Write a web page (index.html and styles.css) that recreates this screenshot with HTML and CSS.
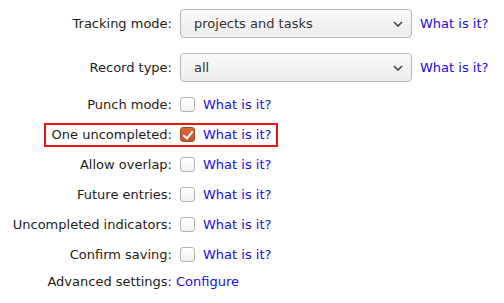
FILE: index.html
```html
<!DOCTYPE html>
<html lang="en">
<head>
<meta charset="utf-8">
<title>Settings</title>
<link rel="stylesheet" href="styles.css">
</head>
<body>
<form class="settings">
  <div class="row row-select">
    <label class="lbl" for="tm">Tracking mode:</label>
    <div class="ctl">
      <div class="select">
        <select id="tm"><option>projects and tasks</option></select>
        <svg class="chev" width="10" height="6" viewBox="0 0 10 6"><path d="M1 1 L5 5 L9 1" fill="none" stroke="#444" stroke-width="1.6"/></svg>
      </div>
      <a href="#" class="help">What is it?</a>
    </div>
  </div>
  <div class="row row-select">
    <label class="lbl" for="rt">Record type:</label>
    <div class="ctl">
      <div class="select">
        <select id="rt"><option>all</option></select>
        <svg class="chev" width="10" height="6" viewBox="0 0 10 6"><path d="M1 1 L5 5 L9 1" fill="none" stroke="#444" stroke-width="1.6"/></svg>
      </div>
      <a href="#" class="help">What is it?</a>
    </div>
  </div>
  <div class="row row-check first">
    <label class="lbl" for="pm">Punch mode:</label>
    <div class="ctl"><input type="checkbox" id="pm"><a href="#" class="help">What is it?</a></div>
  </div>
  <div class="row row-check">
    <label class="lbl" for="ou"><span class="hltext">One uncompleted:</span></label>
    <div class="ctl"><input type="checkbox" id="ou" checked><a href="#" class="help">What is it?</a></div>
  </div>
  <div class="row row-check">
    <label class="lbl" for="ao">Allow overlap:</label>
    <div class="ctl"><input type="checkbox" id="ao"><a href="#" class="help">What is it?</a></div>
  </div>
  <div class="row row-check">
    <label class="lbl" for="fe">Future entries:</label>
    <div class="ctl"><input type="checkbox" id="fe"><a href="#" class="help">What is it?</a></div>
  </div>
  <div class="row row-check">
    <label class="lbl" for="ui">Uncompleted indicators:</label>
    <div class="ctl"><input type="checkbox" id="ui"><a href="#" class="help">What is it?</a></div>
  </div>
  <div class="row row-check">
    <label class="lbl" for="cs">Confirm saving:</label>
    <div class="ctl"><input type="checkbox" id="cs"><a href="#" class="help">What is it?</a></div>
  </div>
  <div class="row row-adv">
    <span class="lbl">Advanced settings:</span>
    <div class="ctl adv"><a href="#" class="help">Configure</a></div>
  </div>
</form>
</body>
</html>
```
FILE: styles.css
```css
html, body {
  margin: 0;
  padding: 0;
  background: #ffffff;
}
body {
  font-family: "DejaVu Sans", "Liberation Sans", sans-serif;
  font-size: 13px;
  color: #1c1c1c;
}
.settings {
  display: flex;
  flex-direction: column;
  padding: 9px 0 0 8px;
}
.row {
  display: flex;
  align-items: center;
}
.row-select {
  height: 29px;
}
.row-select + .row-select {
  margin-top: 15px;
}
.row-check {
  height: 30px;
}
.row-check.first {
  margin-top: 7px;
}
.row-adv {
  height: 24px;
}
.lbl {
  flex: 0 0 164px;
  text-align: right;
  white-space: nowrap;
}
.ctl {
  display: flex;
  align-items: center;
  gap: 8px;
  margin-left: 8px;
}
.ctl.adv {
  margin-left: 4px;
}
.help {
  color: #1a0af0;
  text-decoration: none;
}
.select {
  position: relative;
  width: 232px;
  height: 29px;
}
.select select {
  -webkit-appearance: none;
  appearance: none;
  width: 100%;
  height: 100%;
  box-sizing: border-box;
  border: 1px solid #b9b9b9;
  border-radius: 4px;
  background: linear-gradient(#fafafa, #ececec);
  font-family: inherit;
  font-size: 13px;
  color: #333;
  padding: 0 30px 0 13px;
  margin: 0;
}
.chev {
  position: absolute;
  right: 9px;
  top: 12px;
  pointer-events: none;
}
input[type="checkbox"] {
  -webkit-appearance: none;
  appearance: none;
  position: relative;
  width: 15px;
  height: 15px;
  margin: 0;
  box-sizing: border-box;
  border: 1px solid #b3b3b3;
  border-radius: 3px;
  background: linear-gradient(#ffffff, #f1f1f1);
}
input[type="checkbox"]:checked {
  background: linear-gradient(#d8693a, #c2542a);
  border-color: #a9491f;
}
input[type="checkbox"]:checked::after {
  content: "";
  position: absolute;
  left: 4px;
  top: 1px;
  width: 4px;
  height: 8px;
  border: solid #ffffff;
  border-width: 0 2px 2px 0;
  transform: rotate(40deg);
}
.hltext {
  position: relative;
}
.hltext::after {
  content: "";
  position: absolute;
  left: -8px;
  right: -106px;
  top: -4px;
  bottom: -5px;
  border: 2px solid #ee1111;
  pointer-events: none;
}
```
